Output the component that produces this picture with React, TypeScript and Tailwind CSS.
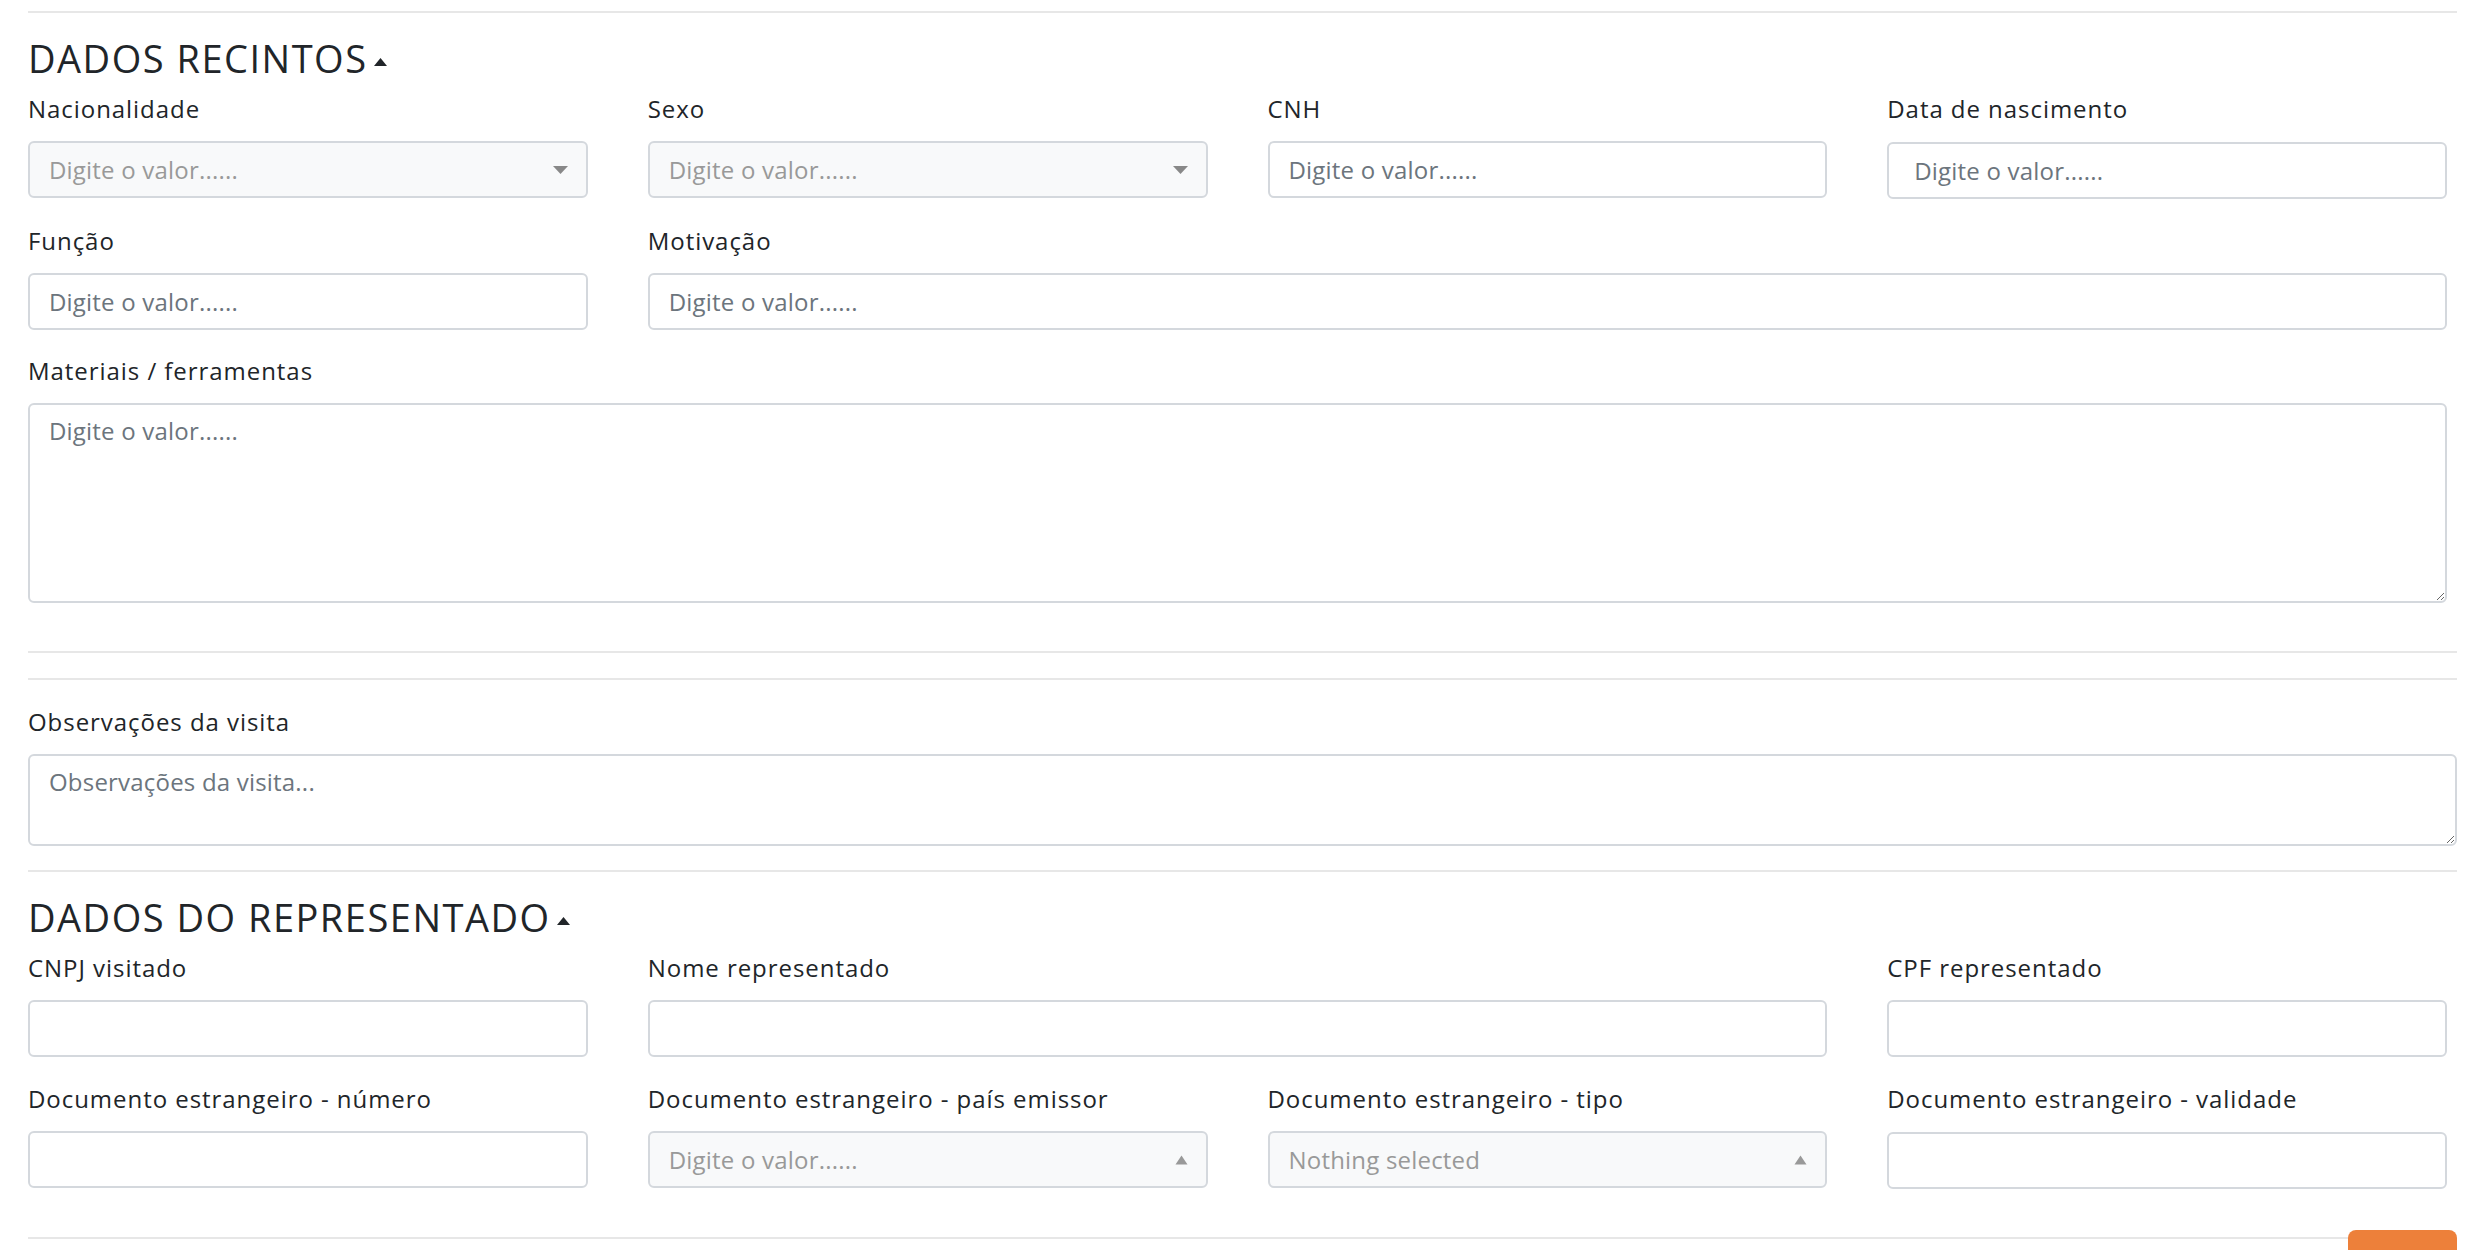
import React from "react";

const font = "font-['Open_Sans','Noto_Sans',sans-serif]";

function Label({ children }: { children: React.ReactNode }) {
  return (
    <label className="block h-[36px] text-[24px] leading-[36px] text-[#212529] tracking-[0.95px] whitespace-nowrap">
      {children}
    </label>
  );
}

function TextInput({
  placeholder,
  className = "",
}: {
  placeholder?: string;
  className?: string;
}) {
  return (
    <input
      placeholder={placeholder}
      className={`block h-[57px] w-full rounded-[6px] border-[2px] border-[#d4d8dd] bg-white px-[19px] text-[24px] tracking-[0.2px] text-[#495057] outline-none placeholder:text-[#6c757d] ${className}`}
    />
  );
}

function SelectBox({
  text,
  up = false,
}: {
  text: string;
  up?: boolean;
}) {
  return (
    <div className="mt-[14px] flex h-[57px] w-full items-center justify-between rounded-[6px] border-[2px] border-[#d4d8dd] bg-[#f8f9fa] pl-[19px] pr-[18px]">
      <span className="text-[24px] tracking-[0.2px] text-[#999999]">{text}</span>
      {up ? (
        <svg width="13" height="10" viewBox="0 0 13 10">
          <path d="M6.5 0.5 L12.5 9.5 L0.5 9.5 Z" fill="#999999" />
        </svg>
      ) : (
        <svg width="15" height="8" viewBox="0 0 15 8">
          <path d="M0 0 L15 0 L7.5 8 Z" fill="#888888" />
        </svg>
      )}
    </div>
  );
}

function Caret() {
  return (
    <svg width="13" height="8" viewBox="0 0 13 8" className="ml-[6px] mt-[6px]">
      <path d="M6.5 0 L13 8 L0 8 Z" fill="#212529" />
    </svg>
  );
}

function Rule({ className = "" }: { className?: string }) {
  return <div className={`h-[2px] bg-[#e7e7e7] ${className}`} />;
}

export default function App() {
  return (
    <div className={`min-h-screen bg-white pl-[28px] pr-[19px] ${font}`}>
      <Rule className="mt-[11px]" />

      <h3 className="mt-[24px] flex h-[43px] items-center text-[38px] font-normal leading-[43px] tracking-[1.5px] text-[#212529]">
        DADOS RECINTOS
        <Caret />
      </h3>

      <div className="mt-[11px] grid grid-cols-4 gap-x-[60px] gap-y-[24px] pr-[10px]">
        <div>
          <Label>Nacionalidade</Label>
          <SelectBox text="Digite o valor......" />
        </div>
        <div>
          <Label>Sexo</Label>
          <SelectBox text="Digite o valor......" />
        </div>
        <div>
          <Label>CNH</Label>
          <TextInput placeholder="Digite o valor......" className="mt-[14px]" />
        </div>
        <div>
          <Label>Data de nascimento</Label>
          <TextInput
            placeholder="Digite o valor......"
            className="mt-[15px] pl-[25px]"
          />
        </div>

        <div>
          <Label>Função</Label>
          <TextInput placeholder="Digite o valor......" className="mt-[14px]" />
        </div>
        <div className="col-span-3">
          <Label>Motivação</Label>
          <TextInput placeholder="Digite o valor......" className="mt-[14px]" />
        </div>
      </div>

      <div className="mt-[23px] pr-[10px]">
        <Label>Materiais / ferramentas</Label>
        <textarea
          placeholder="Digite o valor......"
          className="mt-[14px] block h-[200px] w-full rounded-[6px] border-[2px] border-[#d4d8dd] bg-white px-[19px] py-[8px] text-[24px] tracking-[0.2px] text-[#495057] outline-none placeholder:text-[#6c757d]"
        />
      </div>

      <Rule className="mt-[48px]" />
      <Rule className="mt-[25px]" />

      <div className="mt-[24px]">
        <Label>Observações da visita</Label>
        <textarea
          placeholder="Observações da visita..."
          className="mt-[14px] block h-[92px] w-full rounded-[6px] border-[2px] border-[#d4d8dd] bg-white px-[19px] py-[8px] text-[24px] tracking-[0.2px] text-[#495057] outline-none placeholder:text-[#6c757d]"
        />
      </div>

      <Rule className="mt-[24px]" />

      <h3 className="mt-[24px] flex h-[43px] items-center text-[38px] font-normal leading-[43px] tracking-[1.5px] text-[#212529]">
        DADOS DO REPRESENTADO
        <Caret />
      </h3>

      <div className="mt-[11px] grid grid-cols-4 gap-x-[60px] gap-y-[24px] pr-[10px]">
        <div>
          <Label>CNPJ visitado</Label>
          <TextInput className="mt-[14px]" />
        </div>
        <div className="col-span-2">
          <Label>Nome representado</Label>
          <TextInput className="mt-[14px]" />
        </div>
        <div>
          <Label>CPF representado</Label>
          <TextInput className="mt-[14px]" />
        </div>

        <div>
          <Label>Documento estrangeiro - número</Label>
          <TextInput className="mt-[14px]" />
        </div>
        <div>
          <Label>Documento estrangeiro - país emissor</Label>
          <SelectBox text="Digite o valor......" up />
        </div>
        <div>
          <Label>Documento estrangeiro - tipo</Label>
          <SelectBox text="Nothing selected" up />
        </div>
        <div>
          <Label>Documento estrangeiro - validade</Label>
          <TextInput className="mt-[15px]" />
        </div>
      </div>

      <div className="mt-[41px] flex items-start">
        <Rule className="mt-[7px] flex-1" />
        <button className="h-[40px] w-[109px] rounded-t-[8px] bg-[#ed803a]" />
      </div>
    </div>
  );
}
